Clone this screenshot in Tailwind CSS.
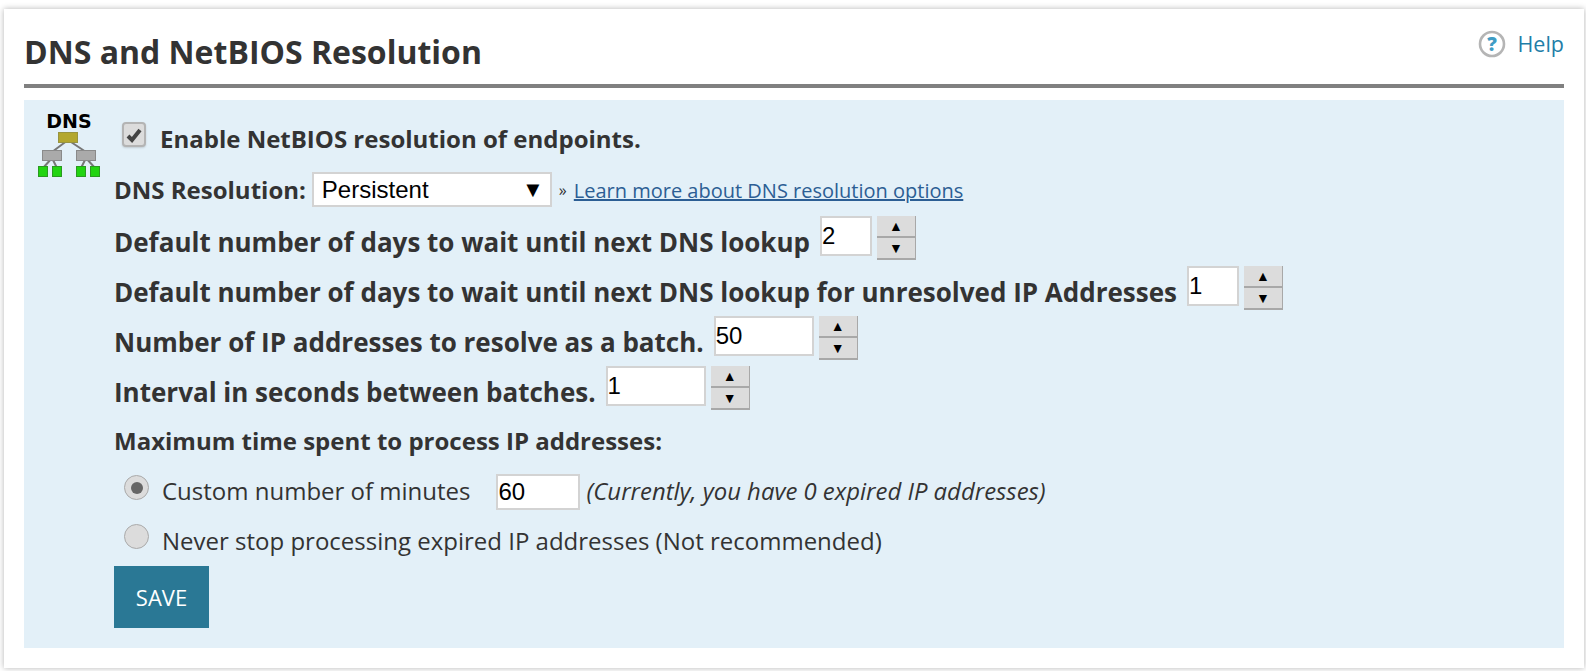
<!DOCTYPE html>
<html><head><meta charset="utf-8"><script src="https://cdn.jsdelivr.net/npm/@tailwindcss/browser@4"></script></head>
<body class="bg-white m-0 overflow-hidden font-['Open_Sans',sans-serif] text-[#333]">
<div class="w-[1586px] h-[671px] pt-[9px] pl-[4px]">
<div class="w-[1580px] h-[659px] bg-white shadow-[0_0_6px_rgba(0,0,0,0.3)] px-[20px] pt-[20px] relative">
  <div class="h-[55px] flex justify-between">
    <h1 class="text-[32px] leading-[46px] font-bold m-0 text-[#333]">DNS and NetBIOS Resolution</h1>
    <a class="flex items-center gap-[11px] h-[30px] text-[#1f7ea8] text-[21.5px]">
      <svg width="28" height="28" viewBox="0 0 28 28"><circle cx="14" cy="14" r="12" fill="#fff" stroke="#b5b5b5" stroke-width="2.6"/><text x="14" y="20.5" text-anchor="middle" font-family="Open Sans" font-weight="800" font-size="19" fill="#3f9cc4">?</text></svg>
      Help</a>
  </div>
  <div class="h-[4px] bg-[#808080]"></div>
  <div class="mt-[12px] h-[548px] bg-[#e3f0f8] flex">
    <div class="w-[90px] pl-[13px] pt-[8px] shrink-0">
      <svg width="64" height="72" viewBox="0 0 64 72">
        <text x="32" y="20" text-anchor="middle" font-family="DejaVu Sans" font-weight="700" font-size="19" fill="#000">DNS</text>
        <path d="M31 32 L15 44 M31 32 L49 44 M15 50 L6 60 M15 50 L20 60 M49 50 L44 60 M49 50 L58 60" stroke="#777" stroke-width="2" fill="none"/>
        <rect x="21.5" y="24.5" width="19" height="10" fill="#b3a72e" stroke="#98943f"/>
        <rect x="5.5" y="42.5" width="19" height="10" fill="#aaa" stroke="#8a8a8a"/>
        <rect x="39.5" y="42.5" width="19" height="10" fill="#aaa" stroke="#8a8a8a"/>
        <rect x="1.5" y="58.5" width="9" height="10" fill="#22d411" stroke="#2a9a20"/>
        <rect x="15.5" y="58.5" width="9" height="10" fill="#22d411" stroke="#2a9a20"/>
        <rect x="39.5" y="58.5" width="9" height="10" fill="#22d411" stroke="#2a9a20"/>
        <rect x="53.5" y="58.5" width="9" height="10" fill="#22d411" stroke="#2a9a20"/>
      </svg>
    </div>
    <div class="flex-1 text-[26px] font-bold">
      <div class="h-[65px] flex pl-[8px] pt-[22px]">
        <span class="w-[24px] h-[25px] bg-[#dcdcdc] border-2 border-[#b4b4b4] rounded-[4px] flex items-center justify-center shadow-[0_1px_2px_rgba(0,0,0,0.15)]">
          <svg width="16" height="16" viewBox="0 0 16 16"><path d="M2 9 L6 13 L14 3" stroke="#444" stroke-width="4" fill="none"/></svg>
        </span>
        <span class="ml-[14px] text-[24px] leading-[33px]">Enable NetBIOS resolution of endpoints.</span>
      </div>
      <div class="h-[52px] flex items-start pt-[7px]">
        <span class="text-[24px] leading-[35px]">DNS Resolution:</span>
        <span class="ml-[6px] w-[240px] h-[35px] bg-white border-2 border-[#d3d3d3] flex items-center justify-between pl-[8px] pr-[6px] font-['Liberation_Sans',sans-serif] font-normal text-[24px] text-black">Persistent<span class="text-[22px]">▼</span></span>
        <span class="ml-[7px] font-normal text-[16px] leading-[37px]">»</span>
        <a class="ml-[7px] font-normal text-[20px] leading-[37px] text-[#2c5e94] underline">Learn more about DNS resolution options</a>
      </div>
      <div class="h-[50px] flex items-start">
        <span class="leading-[50px]">Default number of days to wait until next DNS lookup</span>
        <span class="ml-[10px] mt-[-1px] w-[52px] h-[40px] bg-white border-2 border-[#d3d3d3] font-['Liberation_Sans',sans-serif] font-normal text-[24px] leading-[36px] text-black">2</span>
        <span class="ml-[5px] mt-[-1px] w-[39px] flex flex-col text-[14px] font-normal text-black font-['Liberation_Sans',sans-serif]">
          <span class="h-[22px] bg-[#dcdcdc] border-b-2 border-r border-[#a8a8a8] text-center leading-[20px]">▲</span>
          <span class="h-[22px] bg-[#dcdcdc] border-b-2 border-r border-[#a8a8a8] text-center leading-[20px]">▼</span>
        </span>
      </div>
      <div class="h-[50px] flex items-start">
        <span class="leading-[50px]">Default number of days to wait until next DNS lookup for unresolved IP Addresses</span>
        <span class="ml-[10px] mt-[-1px] w-[52px] h-[40px] bg-white border-2 border-[#d3d3d3] font-['Liberation_Sans',sans-serif] font-normal text-[24px] leading-[36px] text-black">1</span>
        <span class="ml-[5px] mt-[-1px] w-[39px] flex flex-col text-[14px] font-normal text-black font-['Liberation_Sans',sans-serif]">
          <span class="h-[22px] bg-[#dcdcdc] border-b-2 border-r border-[#a8a8a8] text-center leading-[20px]">▲</span>
          <span class="h-[22px] bg-[#dcdcdc] border-b-2 border-r border-[#a8a8a8] text-center leading-[20px]">▼</span>
        </span>
      </div>
      <div class="h-[50px] flex items-start">
        <span class="leading-[50px]">Number of IP addresses to resolve as a batch.</span>
        <span class="ml-[10px] mt-[-1px] w-[100px] h-[40px] bg-white border-2 border-[#d3d3d3] font-['Liberation_Sans',sans-serif] font-normal text-[24px] leading-[36px] text-black">50</span>
        <span class="ml-[5px] mt-[-1px] w-[39px] flex flex-col text-[14px] font-normal text-black font-['Liberation_Sans',sans-serif]">
          <span class="h-[22px] bg-[#dcdcdc] border-b-2 border-r border-[#a8a8a8] text-center leading-[20px]">▲</span>
          <span class="h-[22px] bg-[#dcdcdc] border-b-2 border-r border-[#a8a8a8] text-center leading-[20px]">▼</span>
        </span>
      </div>
      <div class="h-[51px] flex items-start">
        <span class="leading-[50px]">Interval in seconds between batches.</span>
        <span class="ml-[10px] mt-[-1px] w-[100px] h-[40px] bg-white border-2 border-[#d3d3d3] font-['Liberation_Sans',sans-serif] font-normal text-[24px] leading-[36px] text-black">1</span>
        <span class="ml-[5px] mt-[-1px] w-[39px] flex flex-col text-[14px] font-normal text-black font-['Liberation_Sans',sans-serif]">
          <span class="h-[22px] bg-[#dcdcdc] border-b-2 border-r border-[#a8a8a8] text-center leading-[20px]">▲</span>
          <span class="h-[22px] bg-[#dcdcdc] border-b-2 border-r border-[#a8a8a8] text-center leading-[20px]">▼</span>
        </span>
      </div>
      <div class="h-[50px] flex items-start text-[24px] leading-[46px]">Maximum time spent to process IP addresses:</div>
      <div class="h-[50px] flex items-start font-normal text-[24px] pl-[10px]">
        <span class="mt-[7px] w-[25px] h-[25px] rounded-full bg-[#dcdcdc] border border-[#aaa] flex items-center justify-center"><span class="w-[12px] h-[12px] rounded-full bg-[#666]"></span></span>
        <span class="ml-[13px] leading-[46px]">Custom number of minutes</span>
        <span class="ml-[25px] mt-[6px] w-[84px] h-[36px] bg-white border-2 border-[#d3d3d3] pl-[1px] font-['Liberation_Sans',sans-serif] text-[24px] leading-[32px] text-black">60</span>
        <span class="ml-[7px] italic text-[23.9px] leading-[46px]">(Currently, you have 0 expired IP addresses)</span>
      </div>
      <div class="h-[48px] flex items-start font-normal text-[24px] pl-[10px]">
        <span class="mt-[6px] w-[25px] h-[25px] rounded-full bg-[#dcdcdc] border border-[#aaa]"></span>
        <span class="ml-[13px] leading-[46px]">Never stop processing expired IP addresses (Not recommended)</span>
      </div>
      <button class="block w-[95px] h-[62px] bg-[#2a7895] text-white font-normal text-[22px]">SAVE</button>
    </div>
  </div>
</div>
</div>
</body></html>
